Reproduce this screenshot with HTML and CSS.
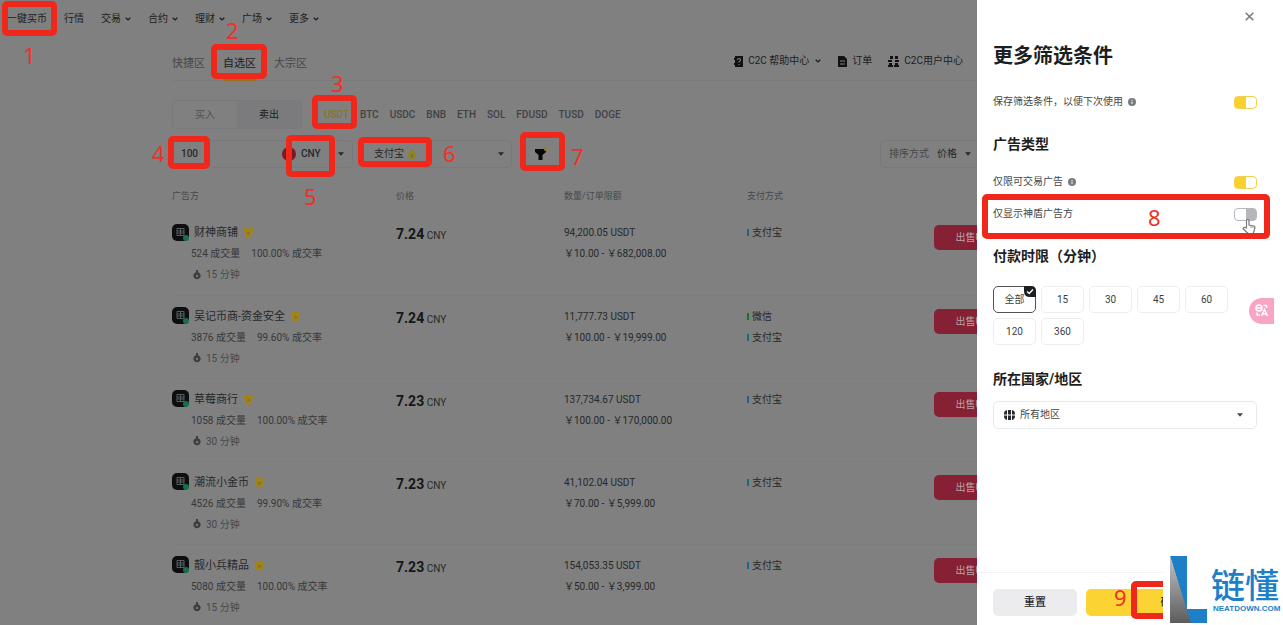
FILE: index.html
```html
<!DOCTYPE html>
<html lang="zh-CN">
  <head>
    <title>C2C 自选区</title>
    <meta charset="UTF-8">
    <link rel="stylesheet" href="styles.css">
  </head>
  <body>
    <svg class="defs" width="0" height="0" aria-hidden="true">
      <symbol id="chevron" viewBox="0 0 6 4"><path d="M.7.7 3 2.9 5.3.7" fill="none" stroke="currentColor" stroke-width="1.4"/></symbol>
      <symbol id="caret" viewBox="0 0 6 4"><path d="M0 .3h6L3 3.7z" fill="currentColor"/></symbol>
      <symbol id="medal" viewBox="0 0 9 11"><path d="M0 1h3l1.500 1L6 1h3v3L8 5.500V9L4.500 11 1 9V5.500L0 4z" fill="#a08414"/><path d="M3 5h3v2.500H3z" fill="#857230"/></symbol>
      <symbol id="timer" viewBox="0 0 8 10"><path d="M3 0h2v2.200a3.600 3.600 0 1 1-2 0z" fill="#3c3e40"/><circle cx="4" cy="6" r="1.200" fill="#777"/></symbol>
      <symbol id="info" viewBox="0 0 8 8"><circle cx="4" cy="4" r="4" fill="#777b80"/><path d="M4 3.500V6M4 1.700v1" stroke="#fff" stroke-width="1"/></symbol>
      <symbol id="avatar" viewBox="0 0 18 18"><rect width="17" height="17" rx="5" fill="#0c0e10"/><path d="M5 4.500h7v7H5zM5 7h7M5 9h7M8.500 4.500v7" fill="none" stroke="#5a5e60"/><circle cx="14" cy="14" r="3" fill="#17704c"/></symbol>
    </svg>

    <div id="page">
      <div id="market">
        <nav class="topnav">
          <a href="#">一键买币</a>
          <a href="#">行情</a>
          <a href="#">交易<svg class="arrow"><use href="#chevron"/></svg></a>
          <a href="#">合约<svg class="arrow"><use href="#chevron"/></svg></a>
          <a href="#">理财<svg class="arrow"><use href="#chevron"/></svg></a>
          <a href="#">广场<svg class="arrow"><use href="#chevron"/></svg></a>
          <a href="#">更多<svg class="arrow"><use href="#chevron"/></svg></a>
        </nav>

        <div class="content">
          <div class="subnav">
            <div class="zones">
              <a href="#">快捷区</a>
              <a href="#" class="current">自选区</a>
              <a href="#">大宗区</a>
            </div>
            <div class="links">
              <a href="#"><svg width="9" height="11" viewBox="0 0 9 11"><path d="M1 0h8v11H1V9H0V7h1V4H0V2h1z" fill="#111"/><path d="M3.500 4c0-2 3-2 3 0 0 1-1.500 1-1.500 2.500M5 8v1" fill="none" stroke="#808080" stroke-width="1.100"/></svg>C2C 帮助中心<svg class="arrow"><use href="#chevron"/></svg></a>
              <a href="#"><svg width="9" height="11" viewBox="0 0 9 11"><path d="M0 0h6l3 3v8H0z" fill="#111"/><path d="M2 5h5M2 8h5" stroke="#808080"/></svg>订单</a>
              <a href="#"><svg width="11" height="11" viewBox="0 0 11 11"><path d="M2 0h3v3H2zM0 4h4v2H0zM7 0h3v3H7zM7 4h4v2H7zM1 7h3v2H1zM0 9h5v2H0zM7 7h3v2H7zM6 9h5v2H6z" fill="#111"/></svg>C2C用户中心</a>
              <a href="#" aria-label="更多"><svg width="9" height="11" viewBox="0 0 9 11"><path d="M0 3h9v5H0z" fill="#111"/></svg></a>
            </div>
          </div>

          <div class="trade">
            <div class="side">
              <button type="button">买入</button>
              <button type="button" class="on">卖出</button>
            </div>
            <div class="coins">
              <a href="#" class="current">USDT</a>
              <a href="#">BTC</a>
              <a href="#">USDC</a>
              <a href="#">BNB</a>
              <a href="#">ETH</a>
              <a href="#">SOL</a>
              <a href="#">FDUSD</a>
              <a href="#">TUSD</a>
              <a href="#">DOGE</a>
            </div>
          </div>

          <div class="filters">
            <div class="field amount">
              <input type="text" value="100" aria-label="金额">
              <svg width="14" height="14" viewBox="0 0 14 14"><circle cx="7" cy="7" r="7" fill="#7c1824"/></svg>
              <select class="cny" aria-label="法币"><option>CNY</option></select>
              <svg class="arrow"><use href="#caret"/></svg>
            </div>
            <div class="field payment">
              <select class="pay" aria-label="支付方式"><option>支付宝</option></select>
              <svg width="8" height="10" viewBox="0 0 8 10"><path d="M4 0 7 3.500Q8 5 8 6.500 8 10 4 10T0 6.500Q0 5 1 3.500z" fill="#8f8420"/><path d="M3 5.500h2v3H3z" fill="#747040"/></svg>
              <svg class="arrow"><use href="#caret"/></svg>
            </div>
            <button type="button" class="funnel" aria-label="更多筛选条件"><svg width="12" height="12" viewBox="0 0 12 12"><path d="M0 1h11v3L7.500 7v5h-4V7L0 4z" fill="#080808"/><circle cx="10.500" cy="1.500" r="1.500" fill="#967c1c"/></svg></button>
            <div class="field sort">
              <label for="sort">排序方式</label>
              <select id="sort"><option>价格</option></select>
              <svg class="arrow"><use href="#caret"/></svg>
            </div>
          </div>

          <table>
            <thead>
              <tr>
                <th class="seller">广告方</th>
                <th class="price">价格</th>
                <th class="limit">数量/订单限额</th>
                <th class="method">支付方式</th>
                <th></th>
              </tr>
            </thead>
            <tbody>
              <tr>
                <td>
                  <div class="name"><svg class="avatar"><use href="#avatar"/></svg>财神商铺<svg class="medal"><use href="#medal"/></svg></div>
                  <div class="stats"><span>524 成交量</span><span>100.00% 成交率</span></div>
                  <div class="time"><svg class="timer"><use href="#timer"/></svg>15 分钟</div>
                </td>
                <td><div class="rate"><b>7.24</b> CNY</div></td>
                <td><div>94,200.05 USDT</div><div>￥10.00 - ￥682,008.00</div></td>
                <td><div class="alipay">支付宝</div></td>
                <td><button type="button" class="sell">出售USDT</button></td>
              </tr>
              <tr>
                <td>
                  <div class="name"><svg class="avatar"><use href="#avatar"/></svg>吴记币商-资金安全<svg class="medal"><use href="#medal"/></svg></div>
                  <div class="stats"><span>3876 成交量</span><span>99.60% 成交率</span></div>
                  <div class="time"><svg class="timer"><use href="#timer"/></svg>15 分钟</div>
                </td>
                <td><div class="rate"><b>7.24</b> CNY</div></td>
                <td><div>11,777.73 USDT</div><div>￥100.00 - ￥19,999.00</div></td>
                <td><div class="wechat">微信</div><div class="alipay">支付宝</div></td>
                <td><button type="button" class="sell">出售USDT</button></td>
              </tr>
              <tr>
                <td>
                  <div class="name"><svg class="avatar"><use href="#avatar"/></svg>草莓商行<svg class="medal"><use href="#medal"/></svg></div>
                  <div class="stats"><span>1058 成交量</span><span>100.00% 成交率</span></div>
                  <div class="time"><svg class="timer"><use href="#timer"/></svg>30 分钟</div>
                </td>
                <td><div class="rate"><b>7.23</b> CNY</div></td>
                <td><div>137,734.67 USDT</div><div>￥100.00 - ￥170,000.00</div></td>
                <td><div class="alipay">支付宝</div></td>
                <td><button type="button" class="sell">出售USDT</button></td>
              </tr>
              <tr>
                <td>
                  <div class="name"><svg class="avatar"><use href="#avatar"/></svg>潮流小金币<svg class="medal"><use href="#medal"/></svg></div>
                  <div class="stats"><span>4526 成交量</span><span>99.90% 成交率</span></div>
                  <div class="time"><svg class="timer"><use href="#timer"/></svg>30 分钟</div>
                </td>
                <td><div class="rate"><b>7.23</b> CNY</div></td>
                <td><div>41,102.04 USDT</div><div>￥70.00 - ￥5,999.00</div></td>
                <td><div class="alipay">支付宝</div></td>
                <td><button type="button" class="sell">出售USDT</button></td>
              </tr>
              <tr>
                <td>
                  <div class="name"><svg class="avatar"><use href="#avatar"/></svg>靓小兵精品<svg class="medal"><use href="#medal"/></svg></div>
                  <div class="stats"><span>5080 成交量</span><span>100.00% 成交率</span></div>
                  <div class="time"><svg class="timer"><use href="#timer"/></svg>15 分钟</div>
                </td>
                <td><div class="rate"><b>7.23</b> CNY</div></td>
                <td><div>154,053.35 USDT</div><div>￥50.00 - ￥3,999.00</div></td>
                <td><div class="alipay">支付宝</div></td>
                <td><button type="button" class="sell">出售USDT</button></td>
              </tr>
            </tbody>
          </table>
        </div>

        <!-- step markers -->
        <div class="mark m1"></div><span class="num n1">1</span>
        <div class="mark m2"></div><span class="num n2">2</span>
        <div class="mark m3"></div><span class="num n3">3</span>
        <div class="mark m4"></div><span class="num n4">4</span>
        <div class="mark m5"></div><span class="num n5">5</span>
        <div class="mark m6"></div><span class="num n6">6</span>
        <div class="mark m7"></div><span class="num n7">7</span>
      </div>

      <div id="drawer">
        <div class="body">
          <button type="button" class="close" aria-label="关闭"><svg width="9" height="9" viewBox="0 0 9 9"><path d="M.7.7l7.600 7.600M8.300.7.7 8.300" stroke="#777" stroke-width="1.500"/></svg></button>
          <h1>更多筛选条件</h1>
          <div class="option save">
            <label for="save">保存筛选条件，以便下次使用</label>
            <svg width="8" height="8"><use href="#info"/></svg>
            <input type="checkbox" id="save" checked>
          </div>
          <h2>广告类型</h2>
          <div class="option">
            <label for="tradable">仅限可交易广告</label>
            <svg width="8" height="8"><use href="#info"/></svg>
            <input type="checkbox" id="tradable" checked>
          </div>
          <div class="option">
            <label for="shield">仅显示神盾广告方</label>
            <input type="checkbox" id="shield">
          </div>
          <h2>付款时限（分钟）</h2>
          <div class="chips">
            <button type="button" class="on">全部<svg width="12" height="11" viewBox="0 0 12 11"><path d="M0 0h7q5 0 5 5v6H6Q0 11 0 5z" fill="#1c1e20"/><path d="M3 5.500 5.200 7.500 9 3.500" fill="none" stroke="#fff" stroke-width="1.400"/></svg></button>
            <button type="button">15</button>
            <button type="button">30</button>
            <button type="button">45</button>
            <button type="button">60</button>
            <button type="button">120</button>
            <button type="button">360</button>
          </div>
          <h2>所在国家/地区</h2>
          <div class="region">
            <svg width="11" height="10" viewBox="0 0 11 10"><rect x="0" y="0" width="11" height="10" rx="4" fill="#26282b"/><path d="M0 5h11M3.500 0v10M7.500 0v10" stroke="#fff"/></svg>
            <select aria-label="所在国家/地区"><option>所有地区</option></select>
            <svg class="arrow"><use href="#caret"/></svg>
          </div>
        </div>
        <div class="footer">
          <button type="button" class="reset">重置</button>
          <button type="button" class="ok">确认</button>
        </div>

        <div class="translate"><svg width="14" height="13" viewBox="0 0 14 13"><circle cx="4" cy="4" r="3" fill="none" stroke="#fff" stroke-width="1.500"/><path d="M1 4h6M8.500 1.500h3V4M2 8.500V11h3M6.500 12 9.500 5.500 12.500 12M7.500 10h4" fill="none" stroke="#fff" stroke-width="1.500"/></svg></div>
        <svg class="hand" width="14" height="15" viewBox="0 0 14 15"><path d="M4.500 9V2q0-1.500 1.200-1.500T7 2v4l5 1q1 .3 1 1.500L12 12l-1 2.500H6L1 9.500q.5-1.500 2-1z" fill="#fff" stroke="#777" stroke-width="1.200"/><path d="M9 6.500V9M11 7v2" stroke="#999"/></svg>
        <div class="mark m8"></div><span class="num n8">8</span>
        <div class="mark m9"></div><span class="num n9">9</span>
        <div class="brand">
          <svg width="37" height="67" viewBox="0 0 37 67">
            <defs><linearGradient id="steel" x1="0" y1="0" x2="0" y2="1"><stop offset="0" stop-color="#c4c4c4"/><stop offset="1" stop-color="#5c5c5c"/></linearGradient></defs>
            <path d="M0 0h17v53h20v14H20z" fill="#1c7fc8"/>
            <path d="M0 0 21 67H0z" fill="url(#steel)"/>
          </svg>
          <div><strong>链懂</strong><small>NEATDOWN.COM</small></div>
        </div>
      </div>
    </div>
  </body>
</html>
```

FILE: styles.css
```css
* {
  box-sizing: border-box;
}
body {
  margin: 0;
  font: 10px/20px Roboto, "Noto Sans CJK SC", sans-serif;
  color: #26282a;
  background: #ffffff;
}
a {
  color: inherit;
  text-decoration: none;
}
button, select, input {
  font: inherit;
  color: inherit;
  margin: 0;
  padding: 0;
  border: 0;
  background: none;
}
select {
  appearance: none;
}
svg {
  flex: none;
}
.defs {
  position: absolute;
}
.arrow {
  width: 6px;
  height: 4px;
}
#page {
  display: flex;
  height: 100vh;
  overflow: hidden;
}

/* dimmed market page */
#market {
  position: relative;
  flex: 1;
  min-width: 0;
  overflow: hidden;
  background: #808080;
}
.topnav {
  display: flex;
  gap: 17px;
  padding: 9px 7px 7px;
  color: #1c1e20;
}
.topnav a {
  display: flex;
  align-items: center;
  gap: 4px;
}
.content {
  width: 1032px;
  padding-left: 172px;
}
.subnav {
  display: flex;
  justify-content: space-between;
  height: 45px;
  border-bottom: 1px solid #7b7b7b;
}
.zones, .links, .links a {
  display: flex;
  align-items: center;
}
.zones {
  gap: 18px;
  font-size: 11px;
  color: #46484a;
}
.zones a {
  height: 45px;
  padding-top: 18px;
}
.zones .current {
  color: #1a1c1e;
  border-bottom: 2px solid #94741c;
}
.links {
  gap: 16px;
  padding: 6px 44px 0 0;
  color: #1c1e20;
}
.links a {
  gap: 5px;
}
.links .arrow {
  margin: 0 1px;
}
.trade {
  display: flex;
  align-items: center;
  gap: 22px;
  padding: 19px 0 11px;
}
.side {
  display: flex;
  width: 130px;
  border: 1px solid #79797b;
  border-radius: 4px;
}
.side button {
  flex: 1;
  height: 27px;
  color: #505254;
}
.side .on {
  background: #7b7b7e;
  color: #1a1c1e;
}
.coins {
  display: flex;
  gap: 11px;
  font-weight: 500;
  color: #404244;
}
.coins .current {
  color: #86761c;
}
.filters {
  display: flex;
  align-items: center;
}
.field {
  display: flex;
  align-items: center;
  height: 28px;
  border: 1px solid #79797b;
  border-radius: 4px;
}
.amount {
  width: 181px;
  padding: 0 8px;
  font-weight: 500;
}
.amount input {
  flex: 1;
  min-width: 0;
}
.cny {
  width: 42px;
  padding-left: 5px;
}
.payment {
  width: 152px;
  margin-left: 7px;
  padding: 0 7px 0 13px;
}
.pay {
  width: 34px;
}
.payment .arrow {
  margin-left: auto;
}
.funnel {
  width: 44px;
  height: 28px;
  margin-left: 7px;
  line-height: 0;
}
.sort {
  width: 152px;
  margin-left: auto;
  padding: 0 8px;
}
.sort label {
  color: #46484a;
  margin-right: 8px;
}
.sort select {
  width: 28px;
}
table {
  table-layout: fixed;
  width: 860px;
  border-collapse: collapse;
}
th {
  height: 44px;
  padding: 12px 0 0;
  font-weight: normal;
  font-size: 9px;
  text-align: left;
  color: #46484a;
}
.seller {
  width: 224px;
}
.price {
  width: 168px;
}
.limit {
  width: 183px;
}
.method {
  width: 187px;
}
td {
  height: 83px;
  padding: 10px 0 0;
  vertical-align: top;
  line-height: 21px;
  border-bottom: 1px solid #7d7d7d;
}
.name, .time {
  display: flex;
  align-items: center;
}
.name {
  font-size: 11px;
}
.avatar {
  width: 18px;
  height: 18px;
  margin-right: 4px;
}
.medal {
  width: 9px;
  height: 11px;
  margin-left: 6px;
}
.stats {
  display: flex;
  gap: 11px;
  padding-left: 19px;
  color: #36383a;
}
.time {
  gap: 5px;
  padding-left: 21px;
  color: #46484a;
}
.timer {
  width: 8px;
  height: 10px;
}
.rate {
  padding-top: 2px;
}
.rate b {
  font-size: 14px;
  color: #141618;
}
.alipay::before, .wechat::before {
  content: "";
  display: inline-block;
  width: 2px;
  height: 7px;
  margin-right: 3px;
  background: #1c6884;
}
.wechat::before {
  background: #1c7030;
}
.sell {
  width: 88px;
  height: 25px;
  margin-top: 3px;
  border-radius: 5px;
  background: #862034;
  color: #b8a4a8;
}

/* filter drawer */
#drawer {
  position: relative;
  flex: 0 0 306px;
  display: flex;
  flex-direction: column;
  justify-content: space-between;
  background: #ffffff;
}
.body {
  padding: 11px 26px 0 16px;
}
.close {
  display: block;
  height: 10px;
  margin: 0 3px 0 auto;
  line-height: 0;
}
h1 {
  margin: 20px 0 21px;
  font-size: 20px;
  line-height: 30px;
  color: #1c1e22;
}
h2 {
  margin: 0;
  font-size: 14px;
  line-height: 20px;
  color: #1c1e22;
}
.option {
  display: flex;
  align-items: center;
  gap: 5px;
  height: 32px;
  color: #44474a;
}
.save {
  height: 20px;
  margin-bottom: 22px;
}
.body h2 + .option {
  margin-top: 12px;
}
.option + h2 {
  margin-top: 16px;
}
.option input {
  appearance: none;
  width: 23px;
  height: 13px;
  margin-left: auto;
  border: 1px solid #b4b6b9;
  border-radius: 4px;
  background: linear-gradient(90deg, #ffffff 50%, #b4b6b9 50%);
}
.option input:checked {
  border-color: #f0d050;
  background: linear-gradient(90deg, #fad02c 50%, #ffffff 50%);
}
.chips {
  display: flex;
  flex-wrap: wrap;
  gap: 5px;
  margin: 20px 0 24px;
}
.chips button {
  position: relative;
  width: 43px;
  height: 27px;
  border: 1px solid #ededee;
  border-radius: 5px;
  color: #3c3f42;
}
.chips .on {
  border-color: #505356;
}
.chips svg {
  position: absolute;
  top: -1px;
  right: -1px;
}
.region {
  display: flex;
  align-items: center;
  gap: 5px;
  height: 28px;
  margin-top: 12px;
  padding: 0 13px 0 10px;
  border: 1px solid #e8e9ea;
  border-radius: 5px;
  color: #44474a;
}
.region select {
  flex: 1;
}
.footer {
  display: flex;
  gap: 9px;
  padding: 16px 26px 9px 16px;
  border-top: 1px solid #f2f2f3;
}
.footer button {
  height: 27px;
  border-radius: 5px;
  font-size: 11px;
  font-weight: 500;
}
.reset {
  width: 84px;
  background: #ececee;
}
.ok {
  flex: 1;
  background: #fbd434;
}
.translate {
  position: absolute;
  top: 298px;
  right: 9px;
  width: 25px;
  height: 26px;
  padding: 6px;
  border-radius: 13px 0 0 13px;
  line-height: 0;
  background: #f8a4c4;
}
.hand {
  position: absolute;
  top: 219px;
  right: 27px;
}
.brand {
  position: absolute;
  right: 0;
  bottom: 0;
  display: flex;
  gap: 4px;
  width: 120px;
  height: 72px;
  padding: 3px 0 0 7px;
  background: #ffffff;
  color: #1c7fc8;
}
.brand strong {
  display: block;
  padding-top: 9px;
  font: 500 34px/38px "Noto Sans CJK SC", sans-serif;
}
.brand small {
  display: block;
  padding-left: 2px;
  font: bold 8px/12px "Liberation Sans", sans-serif;
}

/* step markers */
.mark {
  position: absolute;
  border: 6px solid #f0281c;
  border-radius: 5px;
}
.num {
  position: absolute;
  font: 22px/24px "Noto Sans", sans-serif;
  color: #f03028;
}
.m1 { left: 2px; top: 1px; width: 55px; height: 35px; }
.m2 { left: 211px; top: 44px; width: 56px; height: 35px; }
.m3 { left: 312px; top: 95px; width: 45px; height: 34px; }
.m4 { left: 168px; top: 136px; width: 42px; height: 33px; }
.m5 { left: 286px; top: 135px; width: 49px; height: 42px; }
.m6 { left: 358px; top: 137px; width: 74px; height: 30px; }
.m7 { left: 520px; top: 132px; width: 45px; height: 39px; }
.m8 { left: 5px; top: 194px; width: 288px; height: 45px; }
.m9 { left: 154px; bottom: 6px; width: 60px; height: 38px; }
.n1 { left: 23px; top: 43px; }
.n2 { left: 226px; top: 18px; }
.n3 { left: 331px; top: 71px; }
.n4 { left: 152px; top: 141px; }
.n5 { left: 304px; top: 184px; }
.n6 { left: 443px; top: 141px; }
.n7 { left: 571px; top: 144px; }
.n8 { left: 171px; top: 205px; }
.n9 { left: 137px; bottom: 16px; }
```
